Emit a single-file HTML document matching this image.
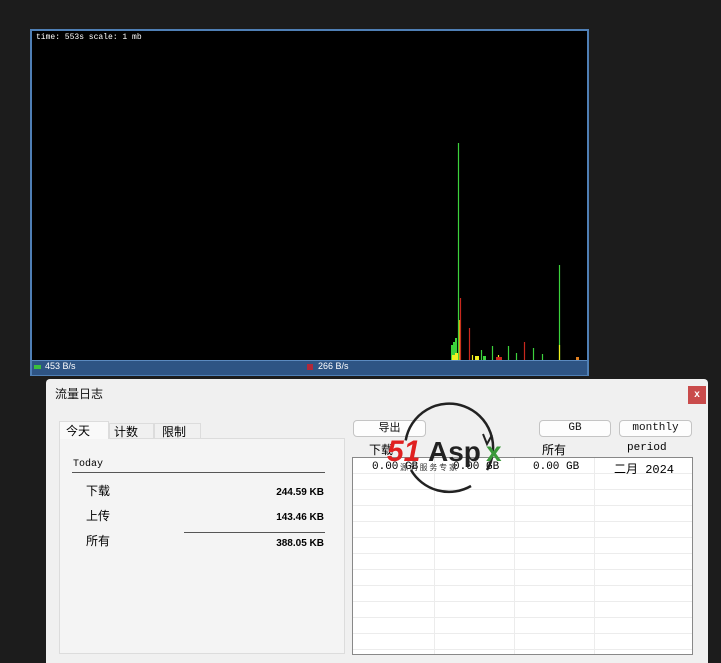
<!DOCTYPE html>
<html><head><meta charset="utf-8"><style>
body{margin:0;width:721px;height:663px;background:#1c1c1c;position:relative;overflow:hidden;font-family:"Liberation Sans","Noto Sans CJK SC",sans-serif}
.a{position:absolute}
.mono{font-family:"Liberation Mono","Noto Sans CJK SC",monospace}
.btn{position:absolute;height:15px;border:1px solid #c4c4c4;border-radius:4px;background:#fdfdfd;font-size:11px;text-align:center;line-height:15px;color:#111}
</style></head><body>
<div class="a" style="left:30px;top:29px;width:555px;height:343px;border:2px solid #4f7fb5;background:#000"></div>
<div class="a" style="left:32px;top:360px;width:555px;height:14px;background:#2e5484;border-top:1px solid #5b8ac0"></div>
<div class="a mono" style="left:36px;top:33px;font-size:8px;color:#fff">time: 553s scale: 1 mb</div>
<div class="a" style="left:34px;top:365px;width:7px;height:4px;background:#3bbf3b"></div>
<div class="a" style="left:45px;top:361px;font-size:9px;color:#fff">453 B/s</div>
<div class="a" style="left:307px;top:364px;width:6px;height:6px;background:#b0283a"></div>
<div class="a" style="left:318px;top:361px;font-size:9px;color:#fff">266 B/s</div>
<svg class="a" style="left:0;top:0" width="721" height="663">
<g stroke-width="1.2">
<line x1="458.5" y1="143" x2="458.5" y2="360" stroke="#3cd23c"/>
<line x1="460.5" y1="298" x2="460.5" y2="360" stroke="#c8281e"/>
<line x1="459.5" y1="320" x2="459.5" y2="360" stroke="#e0a010"/>
<line x1="559.5" y1="265" x2="559.5" y2="360" stroke="#3cd23c"/>
<line x1="559.5" y1="345" x2="559.5" y2="360" stroke="#f0f020"/>
<line x1="469.5" y1="328" x2="469.5" y2="360" stroke="#c8281e"/>
<line x1="524.5" y1="342" x2="524.5" y2="360" stroke="#c8281e"/>
<line x1="492.5" y1="346" x2="492.5" y2="360" stroke="#3cd23c"/>
<line x1="508.5" y1="346" x2="508.5" y2="360" stroke="#3cd23c"/>
<line x1="533.5" y1="348" x2="533.5" y2="360" stroke="#3cd23c"/>
<line x1="481.5" y1="350" x2="481.5" y2="360" stroke="#3cd23c"/>
<line x1="516.5" y1="353" x2="516.5" y2="360" stroke="#3cd23c"/>
<line x1="542.5" y1="354" x2="542.5" y2="360" stroke="#3cd23c"/>
<line x1="472.5" y1="355" x2="472.5" y2="360" stroke="#f0f020"/>
<line x1="498.5" y1="355" x2="498.5" y2="360" stroke="#f0f020"/>
</g>
<path d="M451 360V345h2v-3h2v-4h2v22z" fill="#3cd23c"/>
<path d="M452 360v-5h3v-2h3v7z" fill="#f0f020"/>
<rect x="475" y="356" width="4" height="4" fill="#f0f020"/>
<rect x="483" y="356" width="3" height="4" fill="#3cd23c"/>
<rect x="496" y="357" width="6" height="3" fill="#c8281e"/>
<rect x="576" y="357" width="3" height="3" fill="#e08020"/>
</svg>
<div class="a" style="left:46px;top:379px;width:662px;height:284px;background:#f0f0f0;border-radius:4px 4px 0 0"></div>
<div class="a" style="left:55px;top:385px;font-size:12px;color:#111">流量日志</div>
<div class="a" style="left:688px;top:386px;width:18px;height:18px;background:#c94b4b;color:#fff;font-size:10px;text-align:center;line-height:17px;font-weight:bold">x</div>
<div class="a" style="left:59px;top:438px;width:284px;height:214px;border:1px solid #dcdcdc;background:#f4f4f4"></div>
<div class="a" style="left:59px;top:421px;width:50px;height:18px;background:#f9f9f9;border:1px solid #dcdcdc;border-bottom:none;font-size:12px;line-height:18px;padding-left:6px;box-sizing:border-box">今天</div>
<div class="a" style="left:109px;top:423px;width:45px;height:15px;border:1px solid #dcdcdc;border-bottom:none;font-size:12px;line-height:16px;padding-left:4px;box-sizing:border-box">计数</div>
<div class="a" style="left:154px;top:423px;width:47px;height:15px;border:1px solid #dcdcdc;border-bottom:none;font-size:12px;line-height:16px;padding-left:7px;box-sizing:border-box">限制</div>
<div class="a mono" style="left:73px;top:459px;font-size:10px">Today</div>
<div class="a" style="left:72px;top:472px;width:253px;height:1px;background:#555"></div>
<div class="a" style="left:86px;top:482px;font-size:12px">下载</div>
<div class="a" style="left:86px;top:507px;font-size:12px">上传</div>
<div class="a" style="left:86px;top:532px;font-size:12px">所有</div>
<div class="a" style="left:220px;top:487px;width:104px;text-align:right;font-size:10px;font-weight:bold">244.59 KB</div>
<div class="a" style="left:220px;top:512px;width:104px;text-align:right;font-size:10px;font-weight:bold">143.46 KB</div>
<div class="a" style="left:184px;top:532px;width:141px;height:1px;background:#555"></div>
<div class="a" style="left:220px;top:538px;width:104px;text-align:right;font-size:10px;font-weight:bold">388.05 KB</div>
<div class="btn" style="left:353px;top:420px;width:71px">导出</div>
<div class="btn mono" style="left:539px;top:420px;width:70px">GB</div>
<div class="btn mono" style="left:619px;top:420px;width:71px">monthly</div>
<div class="a" style="left:369px;top:441px;font-size:12px">下载</div>
<div class="a" style="left:542px;top:441px;font-size:12px">所有</div>
<div class="a mono" style="left:627px;top:442px;font-size:11px">period</div>
<svg class="a" style="left:352px;top:457px" width="341" height="198">
<rect x="0.5" y="0.5" width="340" height="197" fill="#fff" stroke="#888"/>
<g stroke="#ececec">
<path d="M82.5 1V197M162.5 1V197M242.5 1V197"/>
<path d="M1 16.5H340M1 32.5H340M1 48.5H340M1 64.5H340M1 80.5H340M1 96.5H340M1 112.5H340M1 128.5H340M1 144.5H340M1 160.5H340M1 176.5H340M1 192.5H340"/>
</g>
</svg>
<div class="a mono" style="left:372px;top:461px;font-size:11px">0.00 GB</div>
<div class="a mono" style="left:453px;top:461px;font-size:11px">0.00 GB</div>
<div class="a mono" style="left:533px;top:461px;font-size:11px">0.00 GB</div>
<div class="a mono" style="left:614px;top:460px;font-size:12px">二月 2024</div>
<svg class="a" style="left:380px;top:400px" width="140" height="100">
<path d="M25.7 40.4 A44 44 0 1 1 107 70" fill="none" stroke="#222" stroke-width="2.5"/>
<path d="M103 34 l4 10 l5 -9" fill="none" stroke="#222" stroke-width="2"/>
<path d="M91 86 A44 44 0 0 1 31 70" fill="none" stroke="#222" stroke-width="2.5"/>
<text x="7" y="61" font-family="Liberation Sans" font-weight="bold" font-style="italic" font-size="30" fill="#e02020">51</text>
<text x="48" y="61" font-family="Liberation Sans" font-weight="bold" font-size="28" fill="#222">Asp</text>
<text x="106" y="61" font-family="Liberation Sans" font-weight="bold" font-size="28" fill="#3a9a3a">x</text>
<text x="20" y="70" font-family="Noto Sans CJK SC" font-size="8" fill="#333">源 码 服 务 专 家</text>
</svg>
</body></html>
